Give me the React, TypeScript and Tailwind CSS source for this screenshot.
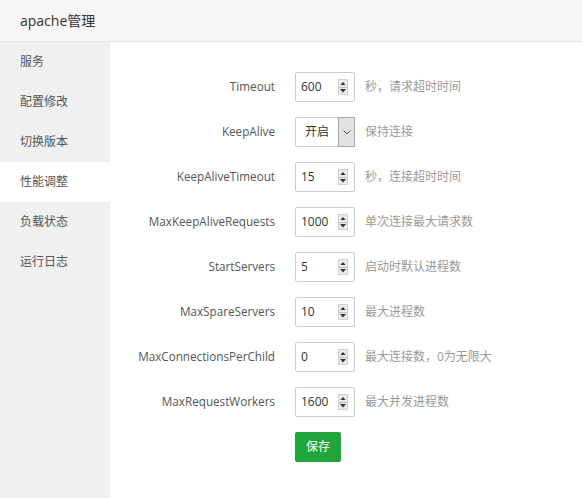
import React from 'react'

const menu = ['服务', '配置修改', '切换版本', '性能调整', '负载状态', '运行日志']

const rows: { label: string; value: string; hint: string; select?: boolean }[] = [
  { label: 'Timeout', value: '600', hint: '秒，请求超时时间' },
  { label: 'KeepAlive', value: '开启', hint: '保持连接', select: true },
  { label: 'KeepAliveTimeout', value: '15', hint: '秒，连接超时时间' },
  { label: 'MaxKeepAliveRequests', value: '1000', hint: '单次连接最大请求数' },
  { label: 'StartServers', value: '5', hint: '启动时默认进程数' },
  { label: 'MaxSpareServers', value: '10', hint: '最大进程数' },
  { label: 'MaxConnectionsPerChild', value: '0', hint: '最大连接数，0为无限大' },
  { label: 'MaxRequestWorkers', value: '1600', hint: '最大并发进程数' },
]

function Spinner() {
  return (
    <div className="flex flex-col w-[10px] h-[16px] border border-[#d0d0d0] bg-[#ebebeb]">
      <div className="flex-1 flex items-center justify-center border-b border-[#c0c0c0]">
        <svg width="6" height="3.5" viewBox="0 0 6 3.5"><path d="M3 0L6 3.5H0z" fill="#333" /></svg>
      </div>
      <div className="flex-1 flex items-center justify-center">
        <svg width="6" height="3.5" viewBox="0 0 6 3.5"><path d="M0 0h6L3 3.5z" fill="#333" /></svg>
      </div>
    </div>
  )
}

export default function App() {
  return (
    <div
      className="w-[582px] h-[498px] flex flex-col bg-white text-[#333] overflow-hidden"
      style={{ fontFamily: '"Open Sans", "Noto Sans CJK SC", sans-serif' }}
    >
      <div className="h-[42px] shrink-0 flex items-center px-5 bg-[#f6f6f6] border-b border-[#e6e6e6] text-[14px] text-[#333]">
        apache管理
      </div>
      <div className="flex flex-1">
        <div className="w-[110px] bg-[#f0f0f0] flex flex-col">
          {menu.map((m) => (
            <div
              key={m}
              className={`h-[40px] flex items-center px-5 text-[12px] text-[#555] ${m === '性能调整' ? 'bg-white' : ''}`}
            >
              {m}
            </div>
          ))}
        </div>
        <div className="flex-1 pt-[30px] flex flex-col gap-[15px]">
          {rows.map((r) => (
            <div key={r.label} className="flex items-center h-[30px]">
              <div className="w-[165px] mr-5 text-right text-[11.7px] text-[#555]">{r.label}</div>
              {r.select ? (
                <div className="w-[60px] h-[30px] flex border border-[#ccc] rounded-[2px] bg-white">
                  <div className="flex-1 flex items-center pl-[9px] text-[12px] text-[#333]">{r.value}</div>
                  <div className="w-[17px] flex items-center justify-center bg-[#e2e2e2] border border-[#a8a8a8] -my-px -mr-px">
                    <svg width="8" height="5" viewBox="0 0 8 5"><path d="M0.5 0.5L4 4L7.5 0.5" stroke="#555" fill="none" /></svg>
                  </div>
                </div>
              ) : (
                <div className="w-[60px] h-[30px] flex items-center justify-between border border-[#ccc] rounded-[2px] bg-white pl-[5px] pr-[6px]">
                  <span className="text-[12px] text-[#333]">{r.value}</span>
                  <Spinner />
                </div>
              )}
              <div className="ml-[10px] text-[12px] text-[#999]">{r.hint}</div>
            </div>
          ))}
          <div className="flex pl-[185px]">
            <button className="w-[46px] h-[30px] rounded-[2px] bg-[#20a53a] text-white text-[12px]">保存</button>
          </div>
        </div>
      </div>
    </div>
  )
}
